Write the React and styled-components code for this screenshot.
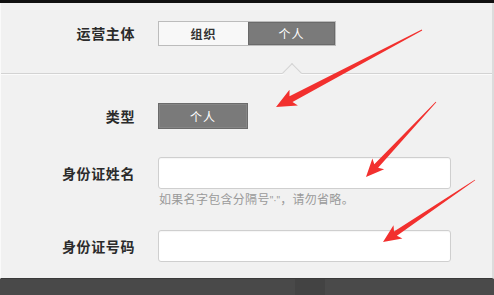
import React from 'react'
import styled, { createGlobalStyle } from 'styled-components'

const GlobalStyle = createGlobalStyle`
  html, body {
    margin: 0;
    padding: 0;
    background: #474747;
  }
  body {
    font-family: "Noto Sans CJK SC", "Noto Sans", sans-serif;
  }
`

const arrows = [
  { tail: [422, 30], tip: [276, 107], head: 17, wing: 9, neck: 3.2 },
  { tail: [436, 102], tip: [366, 177], head: 15, wing: 8, neck: 2.6 },
  { tail: [475, 180], tip: [383, 242], head: 15, wing: 8, neck: 2.6 },
]

const arrowPoints = ({ tail, tip, head, wing, neck }) => {
  const [tx, ty] = tail
  const [px, py] = tip
  const len = Math.hypot(px - tx, py - ty)
  const ux = (px - tx) / len
  const uy = (py - ty) / len
  const nx = -uy
  const ny = ux
  const bx = px - ux * head
  const by = py - uy * head
  const wx = bx - ux * 3
  const wy = by - uy * 3
  const pts = [
    [tx + nx * 0.4, ty + ny * 0.4],
    [bx + nx * neck, by + ny * neck],
    [wx + nx * wing, wy + ny * wing],
    [px, py],
    [wx - nx * wing, wy - ny * wing],
    [bx - nx * neck, by - ny * neck],
    [tx - nx * 0.4, ty - ny * 0.4],
  ]
  return pts.map(p => p.map(v => v.toFixed(1)).join(',')).join(' ')
}

const Page = styled.div`
  position: relative;
  width: 494px;
  height: 295px;
  overflow: hidden;
  background: #474747;
`

const TopBar = styled.div`
  height: 3px;
  background: #111;
`

const Panel = styled.div`
  background: #f1f1f1;
  border-left: 1px solid #fafafa;
  border-right: 2px solid #dcdcdc;
  border-bottom: 1px solid #3a3a3a;
`

const Section = styled.div`
  display: flex;
  flex-direction: column;
  gap: ${p => p.gap || 0}px;
  padding: ${p => p.pad};
`

const Row = styled.div`
  display: grid;
  grid-template-columns: 134px auto;
  column-gap: 23px;
  align-items: start;
  margin-top: ${p => p.shift || 0}px;
`

const Label = styled.div`
  text-align: right;
  font-size: 14px;
  font-weight: 700;
  color: #2b2b2b;
  letter-spacing: 0.6px;
  line-height: ${p => p.h}px;
`

const Segmented = styled.div`
  display: flex;
  width: 178px;
  height: 25px;
  border: 1px solid #bcbcbc;
  box-sizing: border-box;
`

const Segment = styled.div`
  flex: ${p => (p.w ? `0 0 ${p.w}px` : 1)};
  display: flex;
  align-items: center;
  justify-content: center;
  font-size: 12px;
  font-weight: ${p => (p.active ? 400 : 700)};
  color: ${p => (p.active ? '#fff' : '#333')};
  background: ${p => (p.active ? '#7a7a7a' : '#f8f8f8')};
  box-shadow: ${p => (p.active ? 'inset 0 0 0 1px #6a6a6a' : 'none')};
  letter-spacing: 1px;
`

const TypeButton = styled.div`
  width: 90px;
  height: 26px;
  box-sizing: border-box;
  display: flex;
  align-items: center;
  justify-content: center;
  font-size: 12px;
  color: #fff;
  background: #7a7a7a;
  border: 1px solid #6b6b6b;
  box-shadow: inset 0 0 0 1px #858585;
  letter-spacing: 1px;
`

const Divider = styled.div`
  position: relative;
  height: 1px;
  background: #d3d3d3;
  border-bottom: 1px solid #fbfbfb;

  &::after {
    content: '';
    position: absolute;
    left: 284px;
    top: -7px;
    width: 13px;
    height: 13px;
    background: #f1f1f1;
    border-top: 1px solid #d3d3d3;
    border-left: 1px solid #d3d3d3;
    transform: rotate(45deg);
  }
`

const Field = styled.div`
  display: flex;
  flex-direction: column;
  gap: 2px;
`

const Input = styled.div`
  width: 293px;
  height: 32px;
  box-sizing: border-box;
  background: #fff;
  border: 1px solid #cfcfcf;
  border-radius: 3px;
  box-shadow: inset 0 1px 1px rgba(0, 0, 0, 0.04);
`

const Hint = styled.div`
  font-size: 12px;
  line-height: 16px;
  color: #9a9a9a;
  padding-left: 1px;
  letter-spacing: 0.3px;
`

const Punct = styled.span`
  font-family: "Liberation Sans", sans-serif;
  font-size: 10px;
  letter-spacing: 0;
`

const BottomBar = styled.div`
  display: flex;
  height: 17px;
`

const BarPart = styled.div`
  flex: ${p => (p.w ? `0 0 ${p.w}px` : 1)};
  background: ${p => p.bg};
`

const ArrowLayer = styled.svg`
  position: absolute;
  left: 0;
  top: 0;
  pointer-events: none;
`

export default function App() {
  return (
    <Page>
      <GlobalStyle />
      <TopBar />
      <Panel>
        <Section pad="18px 0 27px">
          <Row>
            <Label h={25}>运营主体</Label>
            <Segmented>
              <Segment w={89}>组织</Segment>
              <Segment active>个人</Segment>
            </Segmented>
          </Row>
        </Section>
        <Divider />
        <Section pad="28px 0 16px" gap={28}>
          <Row>
            <Label h={26}>类型</Label>
            <TypeButton>个人</TypeButton>
          </Row>
          <Row>
            <Label h={32}>身份证姓名</Label>
            <Field>
              <Input />
              <Hint>如果名字包含分隔号<Punct>"·"</Punct>，请勿省略。</Hint>
            </Field>
          </Row>
          <Row shift={-7}>
            <Label h={32}>身份证号码</Label>
            <Input />
          </Row>
        </Section>
      </Panel>
      <BottomBar>
        <BarPart w={295} bg="#494949" />
        <BarPart w={30} bg="#434343" />
        <BarPart bg="#4a4a4a" />
      </BottomBar>
      <ArrowLayer width="494" height="295" viewBox="0 0 494 295">
        {arrows.map((a, i) => (
          <polygon key={i} points={arrowPoints(a)} fill="#f2302e" />
        ))}
      </ArrowLayer>
    </Page>
  )
}
